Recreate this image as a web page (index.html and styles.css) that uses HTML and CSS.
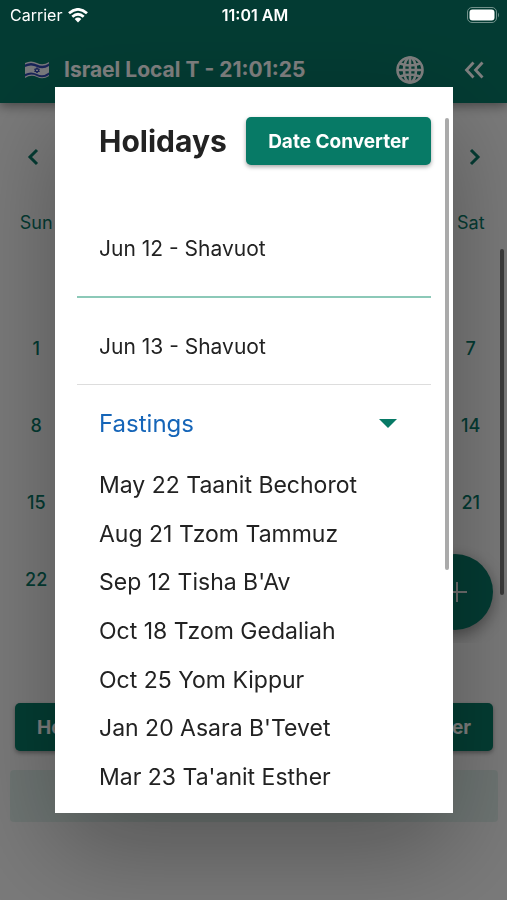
FILE: index.html
```html
<!DOCTYPE html>
<html lang="en">
<head>
<meta charset="utf-8">
<meta name="viewport" content="width=device-width, initial-scale=1">
<title>Holidays</title>
<link rel="stylesheet" href="styles.css">
</head>
<body>
<div class="app">
  <header class="toolbar">
    <svg class="flag" viewBox="0 0 26 20" aria-hidden="true">
      <path d="M1 3Q7 0 13 3T25 2V16Q19 20 13 17T1 18Z" fill="#f0f2f8"/>
      <path d="M1 4.500Q7 1.500 13 4.500T25 3.500V6Q19 10 13 7T1 7ZM1 14Q7 11 13 14T25 12.500V15Q19 19 13 16T1 16.500Z" fill="#3048b0"/>
      <path d="M13 7.500l2.400 4h-4.800zM13 13l-2.400-4h4.800z" fill="none" stroke="#3048b0"/>
    </svg>
    <h1 class="clock">Israel Local T - 21:01:25</h1>
    <button class="icon-button" aria-label="Language">
      <svg class="globe" viewBox="0 0 28 28" fill="none" stroke="currentColor" stroke-width="2.600">
        <circle cx="14" cy="14" r="12.500"/><ellipse cx="14" cy="14" rx="6" ry="12.500"/>
        <path d="M14 1.500v25M1.500 14h25M4 7.500q10 4 20 0M4 20.500q10-4 20 0"/>
      </svg>
    </button>
    <button class="icon-button" aria-label="Collapse">
      <svg class="chevrons" viewBox="0 0 20 18" fill="none" stroke="currentColor" stroke-width="2.800">
        <path d="M9.500 1.500L2.500 9l7 7.500M18.500 1.500L11.500 9l7 7.500"/>
      </svg>
    </button>
  </header>

  <main class="page">
    <section class="calendar">
      <div class="month-nav">
        <button class="nav-button" aria-label="Previous month"><svg class="arrow" viewBox="0 0 12 18"><path d="M10 2L3 9l7 7"/></svg></button>
        <button class="nav-button" aria-label="Next month"><svg class="arrow" viewBox="0 0 12 18"><path d="M2 2l7 7-7 7"/></svg></button>
      </div>
      <table class="days">
        <thead><tr><th>Sun</th><th></th><th></th><th></th><th></th><th></th><th>Sat</th></tr></thead>
        <tbody>
          <tr><td>1</td><td></td><td></td><td></td><td></td><td></td><td>7</td></tr>
          <tr><td>8</td><td></td><td></td><td></td><td></td><td></td><td>14</td></tr>
          <tr><td>15</td><td></td><td></td><td></td><td></td><td></td><td>21</td></tr>
          <tr><td>22</td><td></td><td></td><td></td><td></td><td></td><td></td></tr>
        </tbody>
      </table>
      <span class="page-scroll"></span>
      <button class="fab" aria-label="Add"><svg class="plus" viewBox="0 0 20 20"><path d="M10 0v20M0 10h20"/></svg></button>
    </section>
    <div class="actions">
      <button class="button">Holidays</button>
      <button class="button">Date Converter</button>
    </div>
    <div class="band"></div>
  </main>
</div>

<div class="backdrop">
  <section class="modal" role="dialog" aria-modal="true" aria-labelledby="modal-title">
    <header class="modal-head">
      <h2 class="modal-title" id="modal-title">Holidays</h2>
      <button class="button">Date Converter</button>
    </header>
    <ul class="holidays">
      <li class="holiday">Jun 12 - Shavuot</li>
      <li class="holiday">Jun 13 - Shavuot</li>
    </ul>
    <button class="group" aria-expanded="true">Fastings <svg class="caret" viewBox="0 0 18 9"><path d="M0 0h18L9 9z"/></svg></button>
    <ul class="fasts">
      <li>May 22 Taanit Bechorot</li>
      <li>Aug 21 Tzom Tammuz</li>
      <li>Sep 12 Tisha B'Av</li>
      <li>Oct 18 Tzom Gedaliah</li>
      <li>Oct 25 Yom Kippur</li>
      <li>Jan 20 Asara B'Tevet</li>
      <li>Mar 23 Ta'anit Esther</li>
    </ul>
    <span class="modal-scroll"></span>
  </section>
</div>

<div class="status">
  <div class="carrier">Carrier
    <svg class="wifi" viewBox="0 0 20 15" fill="none" stroke="#fff" stroke-width="2.800">
      <path d="M1 5.300Q10-2.500 19 5.300M4.300 8.800Q10 3.800 15.700 8.800"/><path d="M6.700 11Q10 8.200 13.300 11L10 14.500z" fill="#fff" stroke="none"/>
    </svg>
  </div>
  <time class="time">11:01 AM</time>
  <svg class="battery" viewBox="0 0 33 16">
    <rect x=".5" y=".5" width="29" height="15" rx="4.500" fill="none" stroke="#71918b"/><rect x="2.500" y="2.500" width="25" height="11" rx="3" fill="#fff"/><path d="M31 5.500q2 2.500 0 5z" fill="#71918b"/>
  </svg>
</div>
</body>
</html>
```
FILE: styles.css
```css
* { box-sizing: border-box; }

body {
  margin: 0;
  font-family: Inter, "Liberation Sans", sans-serif;
  color: #222;
  background: #f4f4f4;
}

h1, h2, ul { margin: 0; padding: 0; font-size: inherit; }
ul { list-style: none; }
svg { display: block; }
button { border: 0; padding: 0; background: none; font: inherit; color: inherit; }

.app { min-height: 100vh; overflow: hidden; }

.toolbar {
  display: flex;
  align-items: center;
  gap: 24px;
  height: 103px;
  padding: 37px 23px 0 24px;
  background: #077766;
  color: #fff;
  box-shadow: 0 3px 10px rgba(0, 0, 0, .4);
}
.flag { width: 26px; height: 20px; margin-right: -10px; }
.clock { flex: 1; font-size: 21px; line-height: 26px; font-weight: 700; white-space: nowrap; }
.icon-button { margin-left: 16px; }
.globe { width: 28px; height: 28px; }
.chevrons { width: 20px; height: 18px; }

.calendar { position: relative; height: 540px; overflow: hidden; }
.month-nav { display: flex; justify-content: space-between; padding: 45px 26px 0 27px; }
.arrow { width: 12px; height: 18px; fill: none; stroke: #077766; stroke-width: 3; }

.days {
  width: 100%;
  margin-top: 34px;
  border-collapse: collapse;
  table-layout: fixed;
  text-align: center;
  font-size: 18px;
  color: #077766;
}
.days th { height: 44px; padding: 0; font-weight: 400; }
.days td { height: 77px; padding: 0; font-weight: 500; }
.days tbody::before { content: ""; display: table-row; height: 66px; }

.page-scroll {
  position: absolute;
  top: 146px;
  right: 3px;
  width: 4px;
  height: 346px;
  border-radius: 2px;
  background: #777;
}
.fab {
  position: absolute;
  right: 14px;
  bottom: 13px;
  display: grid;
  place-items: center;
  width: 76px;
  height: 76px;
  border-radius: 50%;
  background: #077766;
  box-shadow: 0 5px 16px rgba(0, 0, 0, .4);
}
.plus { width: 20px; height: 20px; margin-left: 4px; stroke: #ddd; stroke-width: 2; }

.actions { display: flex; justify-content: space-between; padding: 60px 14px 0 15px; }
.button {
  height: 48px;
  padding: 0 22px;
  border-radius: 5px;
  background: #077a66;
  box-shadow: 0 2px 4px rgba(0, 0, 0, .35);
  color: #fff;
  font-size: 19px;
  font-weight: 700;
  white-space: nowrap;
}
.band { height: 52px; margin: 19px 9px 0 10px; border-radius: 4px; background: #dceae6; }

.backdrop {
  position: fixed;
  inset: 0;
  display: flex;
  padding: 87px 54px 87px 55px;
  background: rgba(0, 0, 0, .5);
}
.modal {
  position: relative;
  flex: 1;
  padding: 30px 22px 0;
  background: #fff;
  box-shadow: 0 36px 96px rgba(0, 0, 0, .3);
  overflow: hidden;
}
.modal-head { display: flex; align-items: center; justify-content: space-between; padding-left: 22px; }
.modal-title { font-size: 30px; line-height: 36px; font-weight: 700; }
.holidays { margin-top: 35px; }
.holiday {
  display: flex;
  align-items: center;
  height: 98px;
  padding-left: 22px;
  border-bottom: 2px solid #8cc9b8;
  font-size: 21px;
}
.holiday:last-child { height: 87px; padding-top: 10px; border-bottom: 1px solid #ddd; }
.group {
  display: flex;
  align-items: center;
  justify-content: space-between;
  width: 100%;
  height: 76px;
  padding: 0 34px 0 22px;
  color: #1565b8;
  font-size: 24px;
}
.caret { width: 18px; height: 9px; fill: #077a66; }
.fasts {
  display: grid;
  align-items: center;
  height: 340px;
  padding-left: 22px;
  font-size: 23px;
  line-height: 28px;
}
.modal-scroll {
  position: absolute;
  top: 31px;
  right: 4px;
  width: 4px;
  height: 452px;
  border-radius: 2px;
  background: #aaa;
}

.status {
  position: fixed;
  inset: 0 0 auto;
  display: grid;
  grid-template-columns: 1fr auto 1fr;
  align-items: center;
  height: 30px;
  padding: 0 7px 0 10px;
  color: #fff;
  font-size: 16px;
}
.carrier { display: flex; align-items: center; gap: 6px; }
.wifi { width: 20px; height: 15px; }
.time { font-weight: 600; }
.battery { justify-self: end; width: 33px; height: 16px; }
```
